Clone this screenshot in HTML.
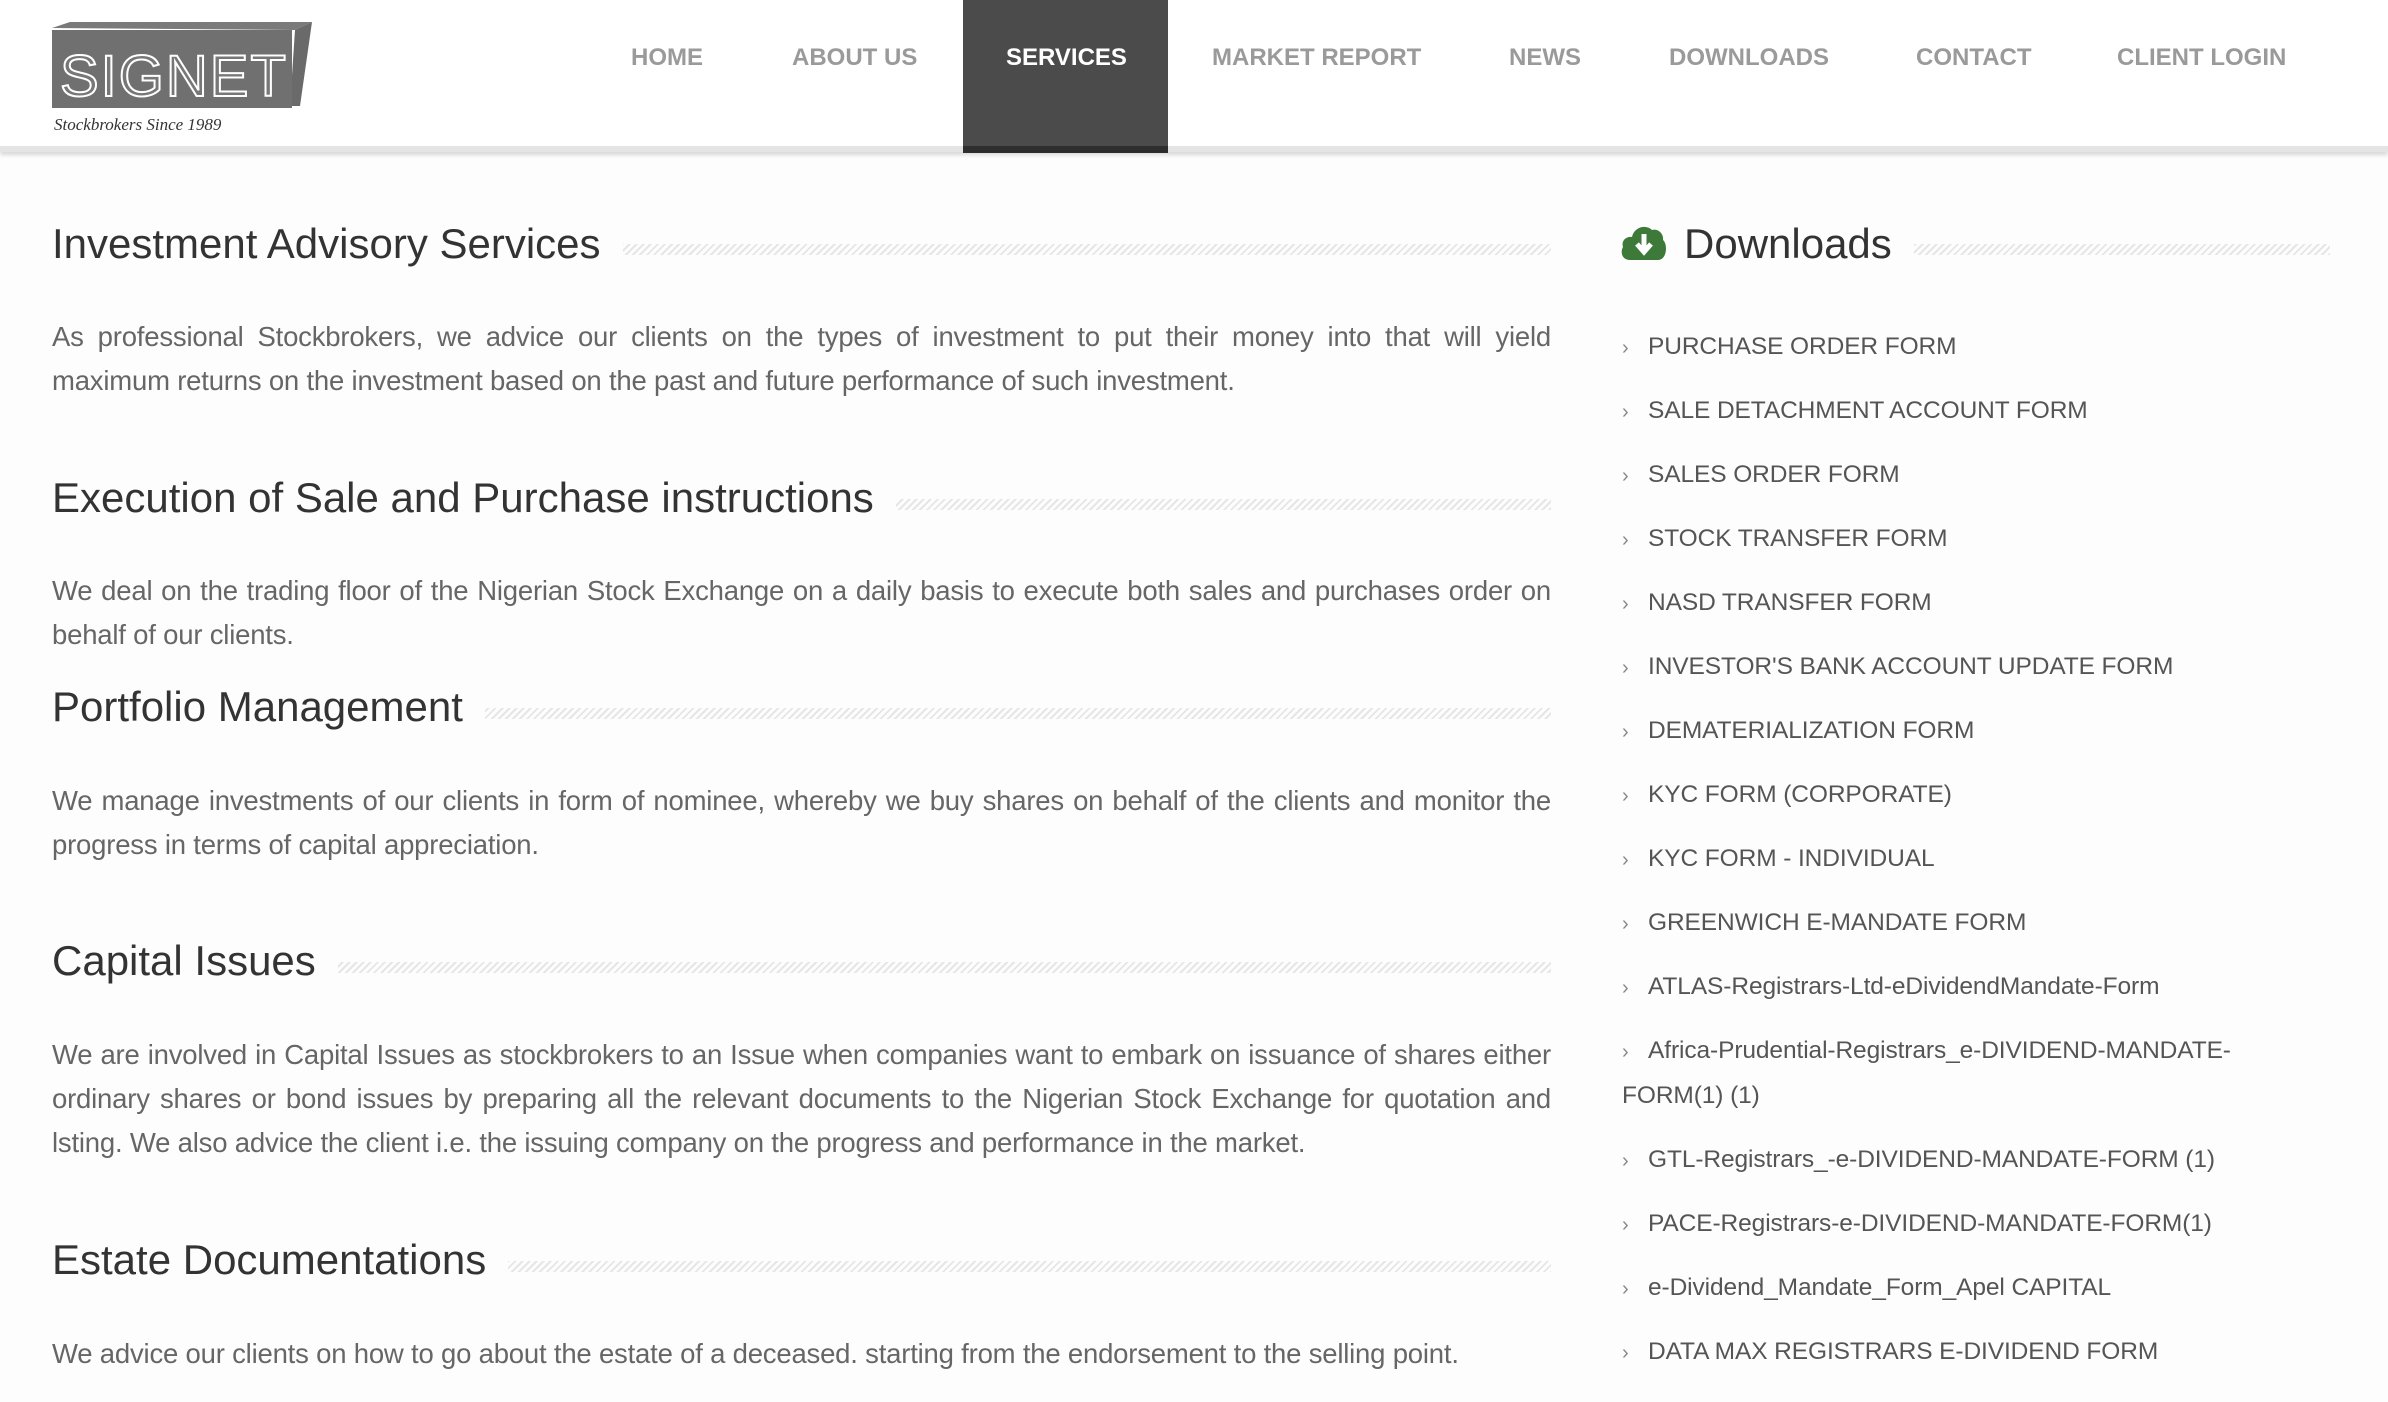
<!DOCTYPE html>
<html><head><meta charset="utf-8"><style>
*{margin:0;padding:0;box-sizing:border-box}
body{width:2388px;height:1402px;overflow:hidden;background:#fdfdfd;font-family:"Liberation Sans",sans-serif;color:#666;position:relative}
.hdr{position:absolute;left:0;top:0;width:2388px;height:152px;background:#fff;border-bottom:6px solid #e4e4e4;box-shadow:0 3px 4px rgba(0,0,0,.15)}
.nav a{position:absolute;top:44px;font-size:24px;font-weight:bold;color:#9a9a9a;text-decoration:none;letter-spacing:0;white-space:nowrap}
.svc{position:absolute;left:963px;top:0;width:205px;height:153px;background:#4b4b4b;border-bottom:7px solid #2e2e2e}
.h{position:absolute;font-size:42px;color:#333;white-space:nowrap;background:#fdfdfd;padding-right:22px;z-index:2}
.line{position:absolute;height:11px;background:repeating-linear-gradient(135deg,#e6e6e6 0 2px,transparent 2px 5px)}
.p{position:absolute;left:52px;width:1499px;font-size:27.5px;line-height:44px;text-align:justify;color:#666;letter-spacing:-.2px}
.li{position:absolute;left:1622px;font-size:24.5px;color:#555;line-height:44px;white-space:nowrap;letter-spacing:-.1px}
.li b{font-weight:normal;color:#888;font-size:20px;display:inline-block;width:26px}
</style></head><body>
<div class="hdr"></div>
<svg style="position:absolute;left:50px;top:18px" width="265" height="120" viewBox="0 0 265 120">
<polygon points="2,10 20,4 262,4 245,12" fill="#7a7a7a"/>
<polygon points="245,12 262,4 250,88 240,88" fill="#6a6a6a"/>
<rect x="2" y="12" width="240" height="78" fill="#707070"/>
<text x="10" y="78" font-family="Liberation Sans" font-size="58" fill="#777" stroke="#fff" stroke-width="2" letter-spacing="2">SIGNET</text>
<text x="4" y="112" font-family="Liberation Serif" font-style="italic" font-size="17" fill="#333">Stockbrokers Since 1989</text>
</svg>
<div class="svc"></div>
<div class="nav">
<a style="left:631px">HOME</a>
<a style="left:792px">ABOUT US</a>
<a style="left:1006px;color:#fff">SERVICES</a>
<a style="left:1212px">MARKET REPORT</a>
<a style="left:1509px">NEWS</a>
<a style="left:1669px">DOWNLOADS</a>
<a style="left:1916px">CONTACT</a>
<a style="left:2117px">CLIENT LOGIN</a>
</div>

<div class="line" style="left:600px;width:951px;top:244px"></div>
<div class="h" style="left:52px;top:220px">Investment Advisory Services</div>
<div class="p" style="top:315px">As professional Stockbrokers, we advice our clients on the types of investment to put their money into that will yield maximum returns on the investment based on the past and future performance of such investment.</div>

<div class="line" style="left:880px;width:671px;top:499px"></div>
<div class="h" style="left:52px;top:474px">Execution of Sale and Purchase instructions</div>
<div class="p" style="top:569px">We deal on the trading floor of the Nigerian Stock Exchange on a daily basis to execute both sales and purchases order on behalf of our clients.</div>

<div class="line" style="left:480px;width:1071px;top:708px"></div>
<div class="h" style="left:52px;top:683px">Portfolio Management</div>
<div class="p" style="top:779px">We manage investments of our clients in form of nominee, whereby we buy shares on behalf of the clients and monitor the progress in terms of capital appreciation.</div>

<div class="line" style="left:320px;width:1231px;top:962px"></div>
<div class="h" style="left:52px;top:937px">Capital Issues</div>
<div class="p" style="top:1033px">We are involved in Capital Issues as stockbrokers to an Issue when companies want to embark on issuance of shares either ordinary shares or bond issues by preparing all the relevant documents to the Nigerian Stock Exchange for quotation and lsting. We also advice the client i.e. the issuing company on the progress and performance in the market.</div>

<div class="line" style="left:500px;width:1051px;top:1261px"></div>
<div class="h" style="left:52px;top:1236px">Estate Documentations</div>
<div class="p" style="top:1332px">We advice our clients on how to go about the estate of a deceased. starting from the endorsement to the selling point.</div>

<div class="line" style="left:1900px;width:430px;top:244px"></div>
<svg style="position:absolute;left:1620px;top:222px" width="48" height="40" viewBox="0 0 48 40"><path d="M10 38 C2 38 0 30 3 25 C1 19 6 14 12 15 C14 5 26 2 32 8 C38 6 44 12 43 18 C48 22 47 38 38 38 Z" fill="#3d7a3a"/><path d="M24 12 V28 M17 22 L24 30 L31 22" stroke="#fff" stroke-width="5" fill="none"/></svg>
<div class="h" style="left:1684px;top:220px">Downloads</div>

<div class="li" style="top:325px"><b>›</b>PURCHASE ORDER FORM</div>
<div class="li" style="top:389px"><b>›</b>SALE DETACHMENT ACCOUNT FORM</div>
<div class="li" style="top:453px"><b>›</b>SALES ORDER FORM</div>
<div class="li" style="top:517px"><b>›</b>STOCK TRANSFER FORM</div>
<div class="li" style="top:581px"><b>›</b>NASD TRANSFER FORM</div>
<div class="li" style="top:645px"><b>›</b>INVESTOR'S BANK ACCOUNT UPDATE FORM</div>
<div class="li" style="top:709px"><b>›</b>DEMATERIALIZATION FORM</div>
<div class="li" style="top:773px"><b>›</b>KYC FORM (CORPORATE)</div>
<div class="li" style="top:837px"><b>›</b>KYC FORM - INDIVIDUAL</div>
<div class="li" style="top:901px"><b>›</b>GREENWICH E-MANDATE FORM</div>
<div class="li" style="top:965px"><b>›</b>ATLAS-Registrars-Ltd-eDividendMandate-Form</div>
<div class="li" style="top:1029px"><b>›</b>Africa-Prudential-Registrars_e-DIVIDEND-MANDATE-<br>FORM(1) (1)</div>
<div class="li" style="top:1138px"><b>›</b>GTL-Registrars_-e-DIVIDEND-MANDATE-FORM (1)</div>
<div class="li" style="top:1202px"><b>›</b>PACE-Registrars-e-DIVIDEND-MANDATE-FORM(1)</div>
<div class="li" style="top:1266px"><b>›</b>e-Dividend_Mandate_Form_Apel CAPITAL</div>
<div class="li" style="top:1330px"><b>›</b>DATA MAX REGISTRARS E-DIVIDEND FORM</div>
</body></html>
